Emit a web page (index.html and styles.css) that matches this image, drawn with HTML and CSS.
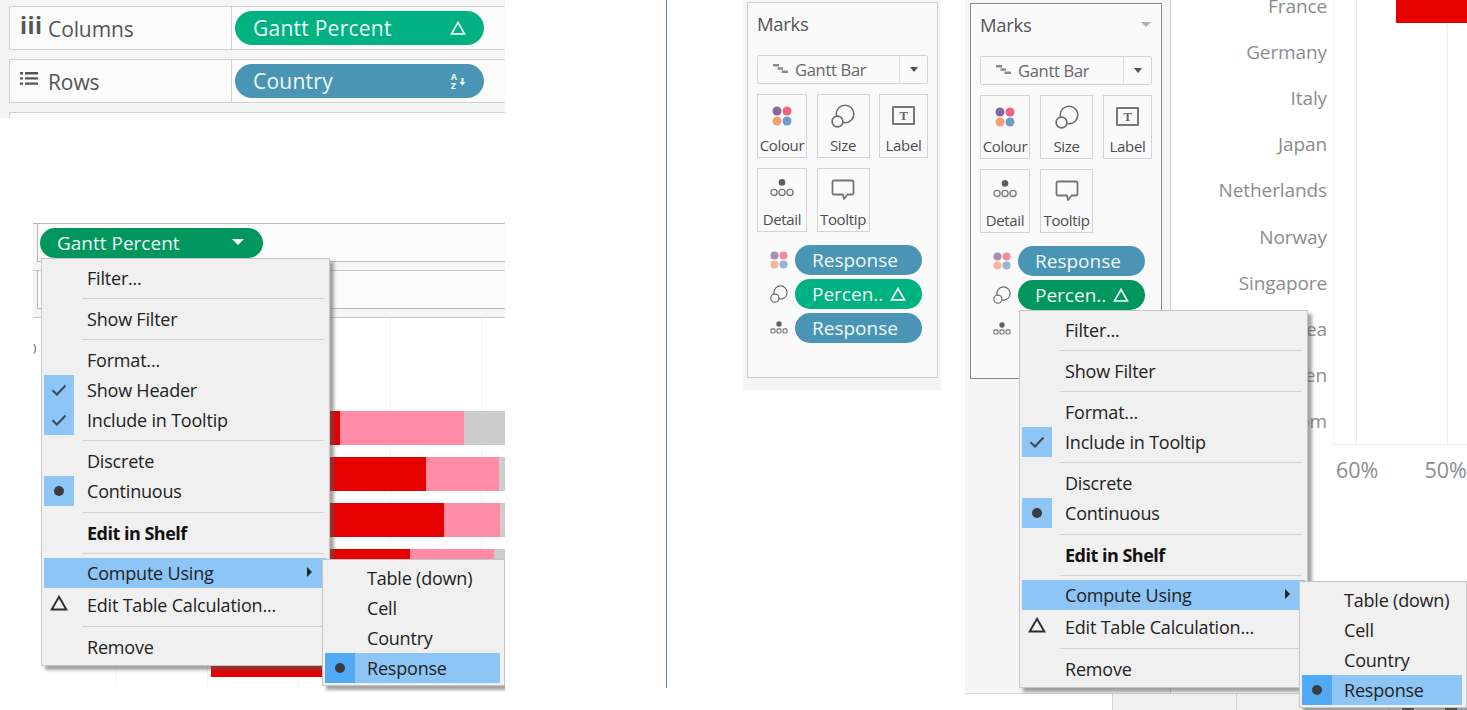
FILE: index.html
```html
<!DOCTYPE html>
<html lang="en">
<head>
<meta charset="utf-8">
<title>Gantt Percent</title>
<link rel="stylesheet" href="styles.css">
</head>
<body>
<svg class="defs" width="0" height="0" aria-hidden="true">
  <symbol id="i-colour" viewBox="0 0 20 20"><circle cx="5" cy="5" r="4.5" fill="#85699a"/><circle cx="15" cy="5" r="4.5" fill="#f0627c"/><circle cx="5" cy="15" r="4.5" fill="#f2a06f"/><circle cx="15" cy="15" r="4.5" fill="#6e9bca"/></symbol>
  <symbol id="i-size" viewBox="0 0 24 24"><circle cx="14" cy="10" r="8.8" fill="none" stroke="#6e6e6e" stroke-width="1.6"/><circle cx="6.5" cy="17.5" r="5.4" fill="#fafafa" stroke="#6e6e6e" stroke-width="1.6"/></symbol>
  <symbol id="i-detail" viewBox="0 0 26 20"><circle cx="13" cy="3.4" r="3.3" fill="#5f5f5f"/><circle cx="5" cy="13.4" r="3.1" fill="none" stroke="#7a7a7a" stroke-width="1.3"/><circle cx="13" cy="13.4" r="3.1" fill="none" stroke="#7a7a7a" stroke-width="1.3"/><circle cx="21" cy="13.4" r="3.1" fill="none" stroke="#7a7a7a" stroke-width="1.3"/></symbol>
  <symbol id="i-detail-s" viewBox="0 0 20 16"><circle cx="10" cy="3.5" r="3" fill="#5f5f5f"/><rect x="1" y="9" width="4.6" height="4.6" rx="1.4" fill="none" stroke="#6e6e6e" stroke-width="1.2"/><rect x="7.7" y="9" width="4.6" height="4.6" rx="1.4" fill="none" stroke="#6e6e6e" stroke-width="1.2"/><rect x="14.4" y="9" width="4.6" height="4.6" rx="1.4" fill="none" stroke="#6e6e6e" stroke-width="1.2"/></symbol>
  <symbol id="i-tooltip" viewBox="0 0 24 22"><path d="M3 1.5h18a1.5 1.5 0 0 1 1.500 1.500v11a1.500 1.500 0 0 1-1.500 1.500h-4.500l-3.500 4.500-1-4.500H3a1.500 1.500 0 0 1-1.500-1.500V3A1.500 1.500 0 0 1 3 1.500z" fill="none" stroke="#757575" stroke-width="1.800" stroke-linejoin="round"/></symbol>
  <symbol id="i-gantt" viewBox="0 0 15 11"><path d="M0 1h6v2.500H0zM4.500 4.200h5.500v2.500H4.500zM8.500 7.500H15V10H8.500z" fill="#8a8a8a"/></symbol>
  <symbol id="i-delta" viewBox="0 0 16 14"><path d="M8 1.500 14.500 12.800H1.500z" fill="none" stroke="currentColor" stroke-width="1.700"/></symbol>
  <symbol id="i-check" viewBox="0 0 16 12"><path d="M1.500 6.200 6 10.500 14.500 1.500" fill="none" stroke="#3d4a55" stroke-width="2"/></symbol>
</svg>

<main class="canvas">

  <section class="shelves">
    <div class="shelf">
      <div class="shelf-head"><span class="shelf-glyph">iii</span><span class="shelf-name">Columns</span></div>
      <div class="shelf-body">
        <div class="pill pill-wide pill-green"><span>Gantt Percent</span><svg class="pill-delta"><use href="#i-delta"/></svg></div>
      </div>
    </div>
    <div class="shelf">
      <div class="shelf-head">
        <svg class="rows-icon" viewBox="0 0 18 15"><path d="M0 1h3v2.400H0zM5 1h13v2.400H5zM0 6.200h3v2.400H0zM5 6.200h13v2.400H5zM0 11.400h3v2.400H0zM5 11.400h13v2.400H5z" fill="#555"/></svg>
        <span class="shelf-name">Rows</span>
      </div>
      <div class="shelf-body">
        <div class="pill pill-wide pill-blue"><span>Country</span><span class="sort-glyph"><span class="sort-az">A<br>Z</span><svg class="sort-arrow" viewBox="0 0 7 9"><path d="M3.500 8.500 0.500 5h2V1h2v4h2z" fill="currentColor"/></svg></span></div>
      </div>
    </div>
    <div class="shelf shelf-cut"></div>
  </section>

  <section class="left-view">
    <div class="view-strip">
      <div class="strip-main"><div class="pill pill-picked"><span>Gantt Percent</span><span class="pill-caret"></span></div></div>
    </div>
    <div class="view-strip view-strip-empty"><div class="strip-main"></div></div>
    <div class="bars">
      <span class="stray">)</span>
      <div class="bar bar-first"><i class="seg seg-red" style="width:280px"></i><i class="seg seg-pink" style="width:124px"></i><i class="seg seg-grey" style="width:41px"></i></div>
      <div class="bar"><i class="seg seg-red" style="width:366px"></i><i class="seg seg-pink" style="width:73px"></i><i class="seg seg-grey" style="width:6px"></i></div>
      <div class="bar"><i class="seg seg-red" style="width:384px"></i><i class="seg seg-pink" style="width:56px"></i><i class="seg seg-grey" style="width:5px"></i></div>
      <div class="bar"><i class="seg seg-red" style="width:350px"></i><i class="seg seg-pink" style="width:84px"></i><i class="seg seg-grey" style="width:11px"></i></div>
      <div class="bar bar-last"><i class="seg seg-red" style="width:294px"></i></div>
    </div>
  </section>

  <div class="rule"></div>

  <section class="marks-shell marks-shell-a">
    <div class="marks">
      <div class="marks-title"><span>Marks</span></div>
      <div class="mark-type"><div class="mark-type-name"><svg class="gantt-icon"><use href="#i-gantt"/></svg><span>Gantt Bar</span></div><div class="mark-type-drop"><span class="caret"></span></div></div>
      <div class="cards">
        <div class="card"><svg class="ic-colour"><use href="#i-colour"/></svg><span>Colour</span></div>
        <div class="card"><svg class="ic-size"><use href="#i-size"/></svg><span>Size</span></div>
        <div class="card"><span class="ic-label">T</span><span>Label</span></div>
        <div class="card"><svg class="ic-detail"><use href="#i-detail"/></svg><span>Detail</span></div>
        <div class="card"><svg class="ic-tooltip"><use href="#i-tooltip"/></svg><span>Tooltip</span></div>
      </div>
      <div class="encodings">
        <div class="encoding"><svg class="enc-icon enc-colour"><use href="#i-colour"/></svg><div class="pill pill-enc pill-blue"><span>Response</span></div></div>
        <div class="encoding"><svg class="enc-icon"><use href="#i-size"/></svg><div class="pill pill-enc pill-green"><span>Percen..</span><svg class="pill-delta"><use href="#i-delta"/></svg></div></div>
        <div class="encoding"><svg class="enc-icon"><use href="#i-detail-s"/></svg><div class="pill pill-enc pill-blue"><span>Response</span></div></div>
      </div>
    </div>
  </section>

  <section class="marks-shell marks-shell-b">
    <div class="marks marks-active">
      <div class="marks-title"><span>Marks</span><span class="title-caret"></span></div>
      <div class="mark-type"><div class="mark-type-name"><svg class="gantt-icon"><use href="#i-gantt"/></svg><span>Gantt Bar</span></div><div class="mark-type-drop"><span class="caret"></span></div></div>
      <div class="cards">
        <div class="card"><svg class="ic-colour"><use href="#i-colour"/></svg><span>Colour</span></div>
        <div class="card"><svg class="ic-size"><use href="#i-size"/></svg><span>Size</span></div>
        <div class="card"><span class="ic-label">T</span><span>Label</span></div>
        <div class="card"><svg class="ic-detail"><use href="#i-detail"/></svg><span>Detail</span></div>
        <div class="card"><svg class="ic-tooltip"><use href="#i-tooltip"/></svg><span>Tooltip</span></div>
      </div>
      <div class="encodings">
        <div class="encoding"><svg class="enc-icon enc-colour"><use href="#i-colour"/></svg><div class="pill pill-enc pill-blue"><span>Response</span></div></div>
        <div class="encoding"><svg class="enc-icon"><use href="#i-size"/></svg><div class="pill pill-enc pill-picked"><span>Percen..</span><svg class="pill-delta"><use href="#i-delta"/></svg></div></div>
        <div class="encoding"><svg class="enc-icon"><use href="#i-detail-s"/></svg></div>
      </div>
    </div>
  </section>

  <section class="right-view">
    <div class="chart">
      <div class="countries">
        <div>France</div><div>Germany</div><div>Italy</div><div>Japan</div><div>Netherlands</div><div>Norway</div><div>Singapore</div><div>South Korea</div><div>Sweden</div><div>United Kingdom</div>
      </div>
      <div class="plot"><div class="plot-bar"></div></div>
    </div>
    <div class="axis"><span>60%</span><span>50%</span></div>
  </section>

  <div class="status-strip">
    <div class="status-white"></div>
    <div class="status-tab"></div>
    <div class="status-tab status-tab-wide"></div>
    <div class="status-rest"><span class="status-stub"></span><span class="status-stub"></span></div>
  </div>

  <nav class="menu menu-a">
    <div class="item"><span class="slot"></span><span>Filter...</span></div>
    <div class="sep"></div>
    <div class="item"><span class="slot"></span><span>Show Filter</span></div>
    <div class="sep"></div>
    <div class="item"><span class="slot"></span><span>Format...</span></div>
    <div class="item"><span class="slot slot-on"><svg class="check"><use href="#i-check"/></svg></span><span>Show Header</span></div>
    <div class="item"><span class="slot slot-on"><svg class="check"><use href="#i-check"/></svg></span><span>Include in Tooltip</span></div>
    <div class="sep"></div>
    <div class="item"><span class="slot"></span><span>Discrete</span></div>
    <div class="item"><span class="slot slot-on"><span class="dot"></span></span><span>Continuous</span></div>
    <div class="sep sep-wide"></div>
    <div class="item item-bold"><span class="slot"></span><span>Edit in Shelf</span></div>
    <div class="sep sep-narrow"></div>
    <div class="item item-hot"><span class="slot"></span><span>Compute Using</span><span class="sub-arrow"></span></div>
    <div class="item item-after-hot"><span class="slot"><svg class="delta"><use href="#i-delta"/></svg></span><span>Edit Table Calculation...</span></div>
    <div class="sep sep-wide"></div>
    <div class="item"><span class="slot"></span><span>Remove</span></div>
  </nav>
  <nav class="submenu submenu-a">
    <div class="item"><span class="slot"></span><span>Table (down)</span></div>
    <div class="item"><span class="slot"></span><span>Cell</span></div>
    <div class="item"><span class="slot"></span><span>Country</span></div>
    <div class="item item-hot"><span class="slot slot-strong"><span class="dot"></span></span><span>Response</span></div>
  </nav>

  <nav class="menu menu-b">
    <div class="item"><span class="slot"></span><span>Filter...</span></div>
    <div class="sep"></div>
    <div class="item"><span class="slot"></span><span>Show Filter</span></div>
    <div class="sep"></div>
    <div class="item"><span class="slot"></span><span>Format...</span></div>
    <div class="item"><span class="slot slot-on"><svg class="check"><use href="#i-check"/></svg></span><span>Include in Tooltip</span></div>
    <div class="sep"></div>
    <div class="item"><span class="slot"></span><span>Discrete</span></div>
    <div class="item"><span class="slot slot-on"><span class="dot"></span></span><span>Continuous</span></div>
    <div class="sep sep-wide"></div>
    <div class="item item-bold"><span class="slot"></span><span>Edit in Shelf</span></div>
    <div class="sep sep-narrow"></div>
    <div class="item item-hot"><span class="slot"></span><span>Compute Using</span><span class="sub-arrow"></span></div>
    <div class="item item-after-hot"><span class="slot"><svg class="delta"><use href="#i-delta"/></svg></span><span>Edit Table Calculation...</span></div>
    <div class="sep sep-wide"></div>
    <div class="item"><span class="slot"></span><span>Remove</span></div>
  </nav>
  <nav class="submenu submenu-b">
    <div class="item"><span class="slot"></span><span>Table (down)</span></div>
    <div class="item"><span class="slot"></span><span>Cell</span></div>
    <div class="item"><span class="slot"></span><span>Country</span></div>
    <div class="item item-hot"><span class="slot slot-strong"><span class="dot"></span></span><span>Response</span></div>
  </nav>

</main>
</body>
</html>
```
FILE: styles.css
```css
* { box-sizing: border-box; }
html, body { margin: 0; padding: 0; background: #fff; }
body { font-family: "Open Sans", "Noto Sans", sans-serif; overflow: hidden; }
.defs { position: absolute; }
.canvas { position: relative; width: 1467px; height: 710px; overflow: hidden; background: #fff; }

/* ---------- shelves ---------- */
.shelves {
  position: absolute; left: 0; top: 0; width: 505px; height: 118px;
  background: #f5f5f5; padding: 6px 0 0 9px; overflow: hidden;
  display: flex; flex-direction: column; gap: 9px;
}
.shelf {
  flex: none; height: 44px; display: flex; background: #fbfbfb;
  border: 1px solid #d2d2d2; border-right: 0;
}
.shelf-cut { background: #fbfbfb; }
.shelf-head {
  width: 222px; flex: none; border-right: 1px solid #d2d2d2;
  display: flex; align-items: center; font-size: 21px; letter-spacing: -0.1px; color: #555;
}
.shelf-name { margin-top: 1px; }
.shelf-glyph { width: 38px; padding-left: 10px; font-weight: 700; font-size: 23px; letter-spacing: 0.5px; color: #555; line-height: 1; margin-top: -6px; }
.rows-icon { width: 18px; height: 15px; margin: -6px 10px 0 10px; }
.shelf-body { flex: 1; padding: 4px 0 0 3px; }

/* ---------- pills ---------- */
.pill {
  display: flex; align-items: center; justify-content: space-between;
  border-radius: 17px; color: #f1f8f6; white-space: nowrap;
}
.pill-wide { width: 249px; height: 34px; padding: 0 18px; font-size: 21px; letter-spacing: 0.25px; }
.pill-green { background: #00b182; }
.pill-blue { background: #4a95b4; }
.pill-picked { background: #02965f; }
.pill-delta { width: 16px; height: 14px; color: #f1f8f6; flex: none; }
.sort-glyph { display: flex; align-items: center; gap: 2px; }
.sort-az { font-size: 9px; line-height: 9px; font-weight: 700; letter-spacing: 0; }
.sort-arrow { width: 7px; height: 9px; color: #f1f8f6; }

/* ---------- left view ---------- */
.left-view {
  position: absolute; left: 33px; top: 223px; width: 472px; height: 465px;
  overflow: hidden; display: flex; flex-direction: column;
}
.view-strip { height: 48px; flex: none; background: #f6f6f6; border-top: 1px solid #b9b9b9; border-bottom: 1px solid #c8c8c8; padding-bottom: 8px; }
.view-strip-empty { height: 47px; border-top: 0; }
.strip-main { height: 100%; margin-left: 4px; background: #fbfbfb; border-left: 1px solid #b9b9b9; border-bottom: 1px solid #b9b9b9; padding: 4px 0 0 2px; }
.pill-picked:not(.pill-enc) { width: 223px; height: 30px; padding: 0 19px 0 17px; font-size: 19px; letter-spacing: 0; border-radius: 15px; }
.pill-caret { width: 0; height: 0; border-left: 6px solid transparent; border-right: 6px solid transparent; border-top: 6px solid #fff; margin-top: -2px; }
.bars {
  position: relative; flex: 1; display: flex; flex-direction: column; align-items: flex-start; gap: 12px;
  background: repeating-linear-gradient(to right, transparent 0 83px, #f2f2f2 83px 84px, transparent 84px 91.2px);
}
.stray { position: absolute; left: 0; top: 24px; font-size: 11px; color: #444; line-height: 1; }
.bar { display: flex; height: 34px; flex: none; margin-left: 27px; }
.bar-first { margin-top: 93px; }
.bar-last { height: 12px; margin-top: 70px; margin-left: 178px; }
.seg { display: block; height: 100%; flex: none; }
.seg-red { background: #e60000; }
.seg-pink { background: #ff8ba6; }
.seg-grey { background: #cccccc; }

/* ---------- divider ---------- */
.rule { position: absolute; left: 666px; top: 0; width: 1px; height: 688px; background: #5f86b3; }

/* ---------- marks ---------- */
.marks-shell { position: absolute; top: 0; background: #f5f5f5; }
.marks-shell-a { left: 743px; width: 198px; height: 390px; padding: 2px 0 0 4px; }
.marks-shell-b { left: 965px; width: 206px; height: 693px; padding: 3px 0 0 5px; border-right: 1px solid #cfcfcf; }
.marks {
  width: 191px; height: 376px; background: #fafafa; border: 1px solid #cdcdcd; padding: 7px 9px 0;
  font-size: 17px; color: #555;
}
.marks-active { width: 192px; border-color: #8b8b8b; }
.marks-title { height: 30px; padding-bottom: 4px; display: flex; align-items: center; justify-content: space-between; margin-bottom: 15px; color: #555; font-size: 18.500px; letter-spacing: -0.3px; }
.title-caret { width: 0; height: 0; border-left: 5px solid transparent; border-right: 5px solid transparent; border-top: 5px solid #b0b0b0; margin-right: 1px; margin-top: 0; }
.mark-type { height: 29px; display: flex; background: #fafafa; border: 1px solid #d4d4d4; border-radius: 2px; margin-bottom: 10px; }
.mark-type-name { flex: 1; border-right: 1px solid #dedede; display: flex; align-items: center; padding-left: 15px; gap: 7px; font-size: 16.500px; letter-spacing: -0.3px; color: #666; }
.gantt-icon { width: 15px; height: 11px; margin-top: -2px; }
.mark-type-drop { width: 27px; flex: none; display: flex; align-items: center; justify-content: center; }
.caret { width: 0; height: 0; border-left: 4.500px solid transparent; border-right: 4.500px solid transparent; border-top: 5px solid #505050; }
.cards { display: grid; grid-template-columns: 50px 53px 49px; grid-auto-rows: 64px; row-gap: 10px; justify-content: space-between; margin-bottom: 13px; }
.card {
  border: 1px solid #d4d4d4; display: flex; flex-direction: column; align-items: center; justify-content: space-between;
  padding: 10px 0 2px; font-size: 15px; letter-spacing: -0.35px; color: #4d4d4d; white-space: nowrap; background: #fafafa;
}
.ic-colour { width: 20px; height: 20px; margin-top: 1px; }
.ic-size { width: 24px; height: 24px; margin-top: -1px; }
.ic-label {
  width: 23px; height: 19px; border: 2px solid #777; border-radius: 1px; color: #666; margin-top: 1px;
  font-family: "Liberation Serif", serif; font-weight: 700; font-size: 13px; line-height: 15px; text-align: center; letter-spacing: 0;
}
.ic-detail { width: 26px; height: 20px; }
.ic-tooltip { width: 24px; height: 22px; }
.encodings { display: flex; flex-direction: column; gap: 4px; }
.encoding { display: flex; align-items: center; height: 30px; padding-left: 13px; gap: 7px; }
.enc-icon { width: 18px; height: 18px; flex: none; }
.enc-colour { opacity: 0.72; }
.pill-enc { width: 127px; height: 30px; border-radius: 15px; padding: 0 16px 0 17px; font-size: 19px; letter-spacing: 0; }

/* ---------- right chart ---------- */
.right-view { position: absolute; left: 1171px; top: 0; width: 296px; height: 693px; overflow: hidden; }
.chart { display: flex; height: 445px; }
.countries {
  width: 156px; flex: none; margin-top: -17.500px; margin-right: 6px;
  font-size: 19px; color: #8c8c8c; text-align: right; white-space: nowrap; letter-spacing: -0.1px;
}
.countries div { height: 46.200px; display: flex; align-items: center; justify-content: flex-end; overflow: hidden; }
.plot {
  flex: 1; position: relative; border-left: 1px solid #f2f2f2; border-bottom: 1px solid #ececec;
  background: repeating-linear-gradient(to right, transparent 0 22px, #ececec 22px 23px, transparent 23px 91px);
}
.plot-bar { height: 23px; width: 71px; margin-left: 62px; background: #e60000; }
.axis { display: flex; gap: 46px; padding: 10px 0 0 165px; font-size: 21.500px; color: #8c8c8c; white-space: nowrap; }

.status-strip { position: absolute; left: 965px; top: 693px; width: 502px; height: 17px; display: flex; border-top: 1px solid #d8d8d8; }
.status-white { width: 148px; background: #fff; border-right: 1px solid #d0d0d0; }
.status-tab { width: 124px; background: #f0f0f0; border-right: 1px solid #d0d0d0; }
.status-tab-wide { width: 153px; }
.status-rest { flex: 1; background: #f0f0f0; display: flex; gap: 31px; align-items: flex-end; padding-left: 12px; }
.status-stub { width: 12px; height: 3px; background: #444; }

/* ---------- context menus ---------- */
.menu, .submenu {
  position: absolute; background: #f0f0f0; border: 1px solid #c6c6c6;
  box-shadow: 4px 4px 3px rgba(90, 90, 90, 0.55); color: #222; font-size: 18px; letter-spacing: -0.2px;
}
.menu { width: 289px; padding: 4px 2px 3px; }
.menu-a { left: 41px; top: 258px; }
.menu-b { left: 1019px; top: 310px; }
.submenu { padding: 3px 4px 2px 2px; clip-path: inset(0 0 -8px 0); }
.submenu-a { left: 322px; top: 559px; width: 183px; }
.submenu-b { left: 1299px; top: 581px; width: 168px; }
.item { height: 30px; display: flex; align-items: center; white-space: nowrap; position: relative; }
.item-bold { font-weight: 700; letter-spacing: -0.5px; color: #111; }
.item-hot { background: #8dc5f6; }
.item-after-hot { margin-top: 2px; }
.slot { width: 30px; height: 30px; flex: none; margin-right: 13px; display: flex; align-items: center; justify-content: center; }
.submenu .slot { margin-right: 12px; }
.slot-on { background: #8dc5f6; }
.slot-strong { background: #52a9f5; }
.dot { width: 10px; height: 10px; border-radius: 50%; background: #3c3c3c; }
.check { width: 16px; height: 12px; }
.delta { width: 18px; height: 16px; color: #2c2c2c; margin-top: -4px; }
.sep { height: 11px; margin: 0 3px 0 38px; display: flex; align-items: center; }
.sep-wide { height: 12px; }
.sep-narrow { height: 10px; }
.sep::before { content: ""; flex: 1; height: 1px; background: #d2d2d2; }
.sub-arrow { position: absolute; right: 15px; top: 9px; width: 0; height: 0; border-top: 5px solid transparent; border-bottom: 5px solid transparent; border-left: 5px solid #222; }
```
